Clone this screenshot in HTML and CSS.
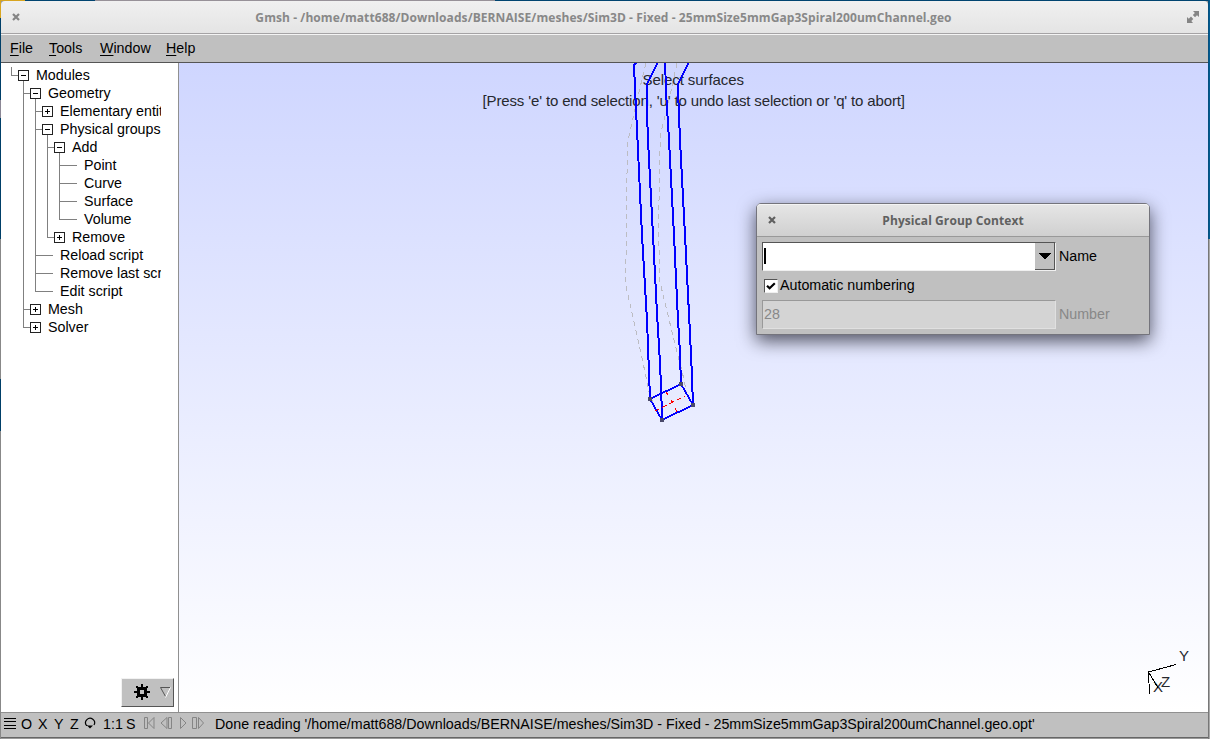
FILE: index.html
```html
<!DOCTYPE html>
<html lang="en">
<head>
<meta charset="utf-8">
<title>Gmsh</title>
<link rel="stylesheet" href="styles.css">
</head>
<body>
<div class="desktop">
<div class="window">
  <header class="titlebar">
    <svg class="close" width="8" height="8" viewBox="0 0 8 8"><path d="M1 1L7 7M7 1L1 7"/></svg>
    <span class="title">Gmsh - /home/matt688/Downloads/BERNAISE/meshes/Sim3D - Fixed - 25mmSize5mmGap3Spiral200umChannel.geo</span>
    <svg class="expand" width="12" height="12" viewBox="0 0 12 12"><path d="M6 0H12V6L10 4.3L8 6.3L5.8 4L7.9 2ZM0 6L1.8 7.7L4 5.6L6.3 8L4.3 10L6 12H0Z"/></svg>
  </header>
  <nav class="menubar">
    <span class="menu m-file"><u>F</u>ile</span><span class="menu m-tools"><u>T</u>ools</span><span class="menu m-window"><u>W</u>indow</span><span class="menu m-help"><u>H</u>elp</span>
  </nav>
  <main class="main">
    <aside class="sidebar">
      <div class="tree">
        <svg class="guides" width="160" height="275" viewBox="1 63 160 275" shape-rendering="crispEdges">
          <path class="guide" d="M11.5 67V75.5H18M23.5 81V327.5H30M23.5 93.5H30M23.5 309.5H30M35.5 99V291.5H53M35.5 111.5H42M35.5 129.5H42M35.5 255.5H53M35.5 273.5H53M47.5 135V237.5H54M47.5 147.5H54M59.5 153V219.5H77M59.5 165.5H77M59.5 183.5H77M59.5 201.5H77"/>
        </svg>
        <div class="row l0"><i class="box"></i>Modules</div>
        <div class="row l1"><i class="box"></i>Geometry</div>
        <div class="row l2"><i class="box plus"></i>Elementary entities</div>
        <div class="row l2"><i class="box"></i>Physical groups</div>
        <div class="row l3"><i class="box"></i>Add</div>
        <div class="row leaf4">Point</div>
        <div class="row leaf4">Curve</div>
        <div class="row leaf4">Surface</div>
        <div class="row leaf4">Volume</div>
        <div class="row l3"><i class="box plus"></i>Remove</div>
        <div class="row leaf2">Reload script</div>
        <div class="row leaf2">Remove last script</div>
        <div class="row leaf2">Edit script</div>
        <div class="row l1"><i class="box plus"></i>Mesh</div>
        <div class="row l1"><i class="box plus"></i>Solver</div>
      </div>
      <div class="gear">
        <svg width="51" height="27" viewBox="0 0 51 27" shape-rendering="crispEdges">
          <g transform="translate(12,5)"><path d="M3 3H13V13H3ZM7 0H9V3H7ZM7 13H9V16H7ZM0 7H3V9H0ZM13 7H16V9H13ZM2 2H4V4H2ZM12 2H14V4H12ZM2 12H4V14H2ZM12 12H14V14H12Z"/><path fill="#c0c0c0" d="M6 6H10V10H6Z"/></g>
          <g fill="none" shape-rendering="auto"><path stroke="#555" d="M43.5 17.5L38.5 8.5H48"/><path stroke="#fff" d="M48.5 8.5L43.5 18.5"/></g>
        </svg>
      </div>
    </aside>
    <section class="canvas">
      <svg class="scene" width="1029" height="649" viewBox="179 63 1029 649">
        <g class="hidden-edges">
          <path d="M646 63L637 100L628 141L626.5 190L626.3 230L625.7 285L642.5 360L650 397L653 402"/>
          <path d="M677 63L669 100L661 132L659.5 160L658.7 227L659.5 280L674 340L682.5 373L687 395L693 405"/>
        </g>
        <g class="labels">
          <text x="642.5" y="84.500" textLength="101.5">Select surfaces</text>
          <text x="482.500" y="106" textLength="422.500">[Press 'e' to end selection, 'u' to undo last selection or 'q' to abort]</text>
          <text x="1179" y="661">Y</text><text x="1161" y="687">Z</text><text x="1153" y="692">X</text>
        </g>
        <g class="edges">
          <path d="M636 63L634 65L636 110L637.5 140L642 235L647 320L650 399"/>
          <path d="M657.5 63L646.5 85V100L648 140L653 235L657 313L660 363L661.3 393L662 420"/>
          <path d="M665 63L666.5 100L669 140L674 235L677.5 310L679.8 350L681 384"/>
          <path d="M688.5 63L677.5 85L678.5 103L680 140L685 235L689.3 320L691.7 370L693 405"/>
          <path class="thin" d="M650 399L681 384L693 405L662 420Z"/>
        </g>
        <path class="normals" d="M655 411L685 396M666 392L668 395M675 408L677 412M671 400L673 403"/>
        <path class="points" d="M648 397h4v4h-4zM679 382h4v4h-4zM691 403h4v4h-4zM660 418h4v4h-4z"/>
        <path class="axes" d="M1176 664.5L1148.5 672L1149.5 694M1148.5 672L1158 688"/>
      </svg>
    </section>
  </main>
  <footer class="status">
    <svg class="tools" width="204" height="24" viewBox="1 713 204 24">
      <path class="k" shape-rendering="crispEdges" d="M4 718.5H16M4 721.5H16M4 725.5H16M4 728.5H16"/>
      <path class="k" d="M87.500 725.500H86.500A4.500 4.500 0 1 1 94 725"/><path d="M87 725.500H93L90 728.500Z"/>
      <g class="dim"><path d="M144.5 717.5H147.5V728.5H144.5ZM154 717.5L148.5 723L154 728.5ZM167 717.5L161 723L167 728.5ZM168.5 717.5H171.500V728.5H168.5ZM180.500 717.5L186 723L180.500 728.500ZM192.500 717.500H196.500V728.500H192.500ZM198.500 717.500L203.500 723L198.500 728.500Z"/></g>
      <g class="stxt"><text x="21" y="729">O</text><text x="38" y="729">X</text><text x="54" y="729">Y</text><text x="70" y="729">Z</text><text x="103" y="729">1:1</text><text x="126" y="729">S</text></g>
    </svg>
    <span class="message">Done reading '/home/matt688/Downloads/BERNAISE/meshes/Sim3D - Fixed - 25mmSize5mmGap3Spiral200umChannel.geo.opt'</span>
  </footer>
</div>
<div class="dialog">
  <header class="dialog-title">
    <svg class="close" width="8" height="8" viewBox="0 0 8 8"><path d="M1 1L7 7M7 1L1 7"/></svg>
    <span class="title">Physical Group Context</span>
  </header>
  <div class="dialog-body">
    <div class="field-row">
      <div class="input"><i class="caret"></i><div class="drop"><svg width="12" height="7" viewBox="0 0 12 7" shape-rendering="crispEdges"><path d="M0 0H12L6 7Z"/></svg></div></div>
      <span class="field-label">Name</span>
    </div>
    <div class="check-row">
      <div class="check"><svg width="10" height="10" viewBox="0 0 10 10"><path d="M1 4.700L3.600 7.300L8.800 2.200"/></svg></div><span class="field-label">Automatic numbering</span>
    </div>
    <div class="field-row disabled">
      <div class="input">28</div>
      <span class="field-label">Number</span>
    </div>
  </div>
</div>
</div>
</body>
</html>
```
FILE: styles.css
```css
* { box-sizing: border-box; }
body {
  margin: 0;
  width: 1210px;
  height: 739px;
  overflow: hidden;
  font: 14.25px/18px "Liberation Sans", Arial, sans-serif;
  color: #000;
}
.desktop {
  position: relative;
  width: 1210px;
  height: 739px;
  padding: 1px 2px 1px 1px;
  background:
    linear-gradient(#d8a520 0 18px, #003f68 18px 100px, #8b8795 100px 118px, #003f68 118px 239px, #888 239px 379px, #003f68 379px 431px, #888 431px) 0 0 / 1px 739px no-repeat,
    linear-gradient(#005b91 0 239px, #a9a9a9 239px) 1209px 0 / 1px 739px no-repeat,
    linear-gradient(#06507f 0 239px, #777 239px) 1208px 0 / 1px 739px no-repeat,
    linear-gradient(90deg, #d8a520 0 25px, #004470 25px 95px, #979198 95px 495px, #004470 495px) 0 0 / 1210px 1px no-repeat,
    #999;
}
.window {
  display: flex;
  flex-direction: column;
  width: 1207px;
  height: 737px;
  border-bottom: 1px solid #666;
  border-radius: 4px 4px 0 0;
  overflow: hidden;
}
.titlebar {
  display: flex;
  align-items: center;
  height: 34px;
  padding: 0 9px 2px 11px;
  border-bottom: 1px solid #f4f4f4;
  box-shadow: inset 0 -1px #a5a3a5;
  background: linear-gradient(#f0f0f0, #e4e4e4);
  color: #888;
}
.title {
  flex: 1;
  padding-top: 2px;
  text-align: center;
  font: bold 12px/20px "Open Sans", "Noto Sans", sans-serif;
  letter-spacing: 0.08px;
  white-space: nowrap;
}
.close { fill: none; stroke: #858585; stroke-width: 2.2; }
.expand { fill: #858585; }
.menubar {
  display: flex;
  height: 28px;
  padding: 4px 9px;
  background: #c0c0c0;
  border-bottom: 1px solid #555;
}
.menu u { text-underline-offset: 2px; text-decoration-thickness: 1px; }
.m-file { width: 39px; }
.m-tools { width: 51px; }
.m-window { width: 66px; }
.main { display: flex; height: 649px; }
.sidebar {
  display: flex;
  flex-direction: column;
  justify-content: space-between;
  width: 178px;
  padding-bottom: 5px;
  background: #fff;
  border-right: 1px solid #909090;
}
.tree { position: relative; width: 160px; padding-top: 4px; overflow: hidden; }
.guides { position: absolute; left: 0; top: 0; }
.guide { fill: none; stroke: #808080; }
.row { position: relative; display: flex; height: 18px; line-height: 17px; white-space: nowrap; }
.l0 { padding-left: 17px; }
.l1 { padding-left: 29px; }
.l2 { padding-left: 41px; }
.l3 { padding-left: 53px; }
.leaf2 { padding-left: 59px; }
.leaf4 { padding-left: 83px; }
.box {
  flex: none;
  width: 11px;
  height: 11px;
  margin: 3px 7px 0 0;
  border: 1px solid #222;
  background: linear-gradient(#000, #000) 2px 4px / 5px 1px no-repeat #fff;
}
.plus {
  background:
    linear-gradient(#000, #000) 2px 4px / 5px 1px no-repeat,
    linear-gradient(#000, #000) 4px 2px / 1px 5px no-repeat #fff;
}
.gear {
  align-self: flex-end;
  width: 53px;
  height: 29px;
  margin-right: 4px;
  border: 1px solid;
  border-color: #f2f2f2 #555 #555 #f2f2f2;
  background: #c0c0c0;
}
.gear svg { display: block; }
.canvas { flex: 1; background: linear-gradient(#cfd6ff, #fff); }
.scene { display: block; }
.scene path { fill: none; shape-rendering: crispEdges; }
.hidden-edges { stroke: #bcbcc2; stroke-width: 1; stroke-dasharray: 5 4; }
.edges { stroke: #00f; stroke-width: 2; }
.scene .thin { stroke-width: 1.8; }
.normals { stroke: #f00; stroke-width: 1; stroke-dasharray: 5 3; }
.scene .points { fill: #4a4a6a; }
.axes { stroke: #000; }
.labels { font-size: 15px; fill: #26282e; }
.status {
  display: flex;
  height: 25px;
  border-top: 1px solid #909090;
  background: #c0c0c0;
  line-height: 23px;
  white-space: nowrap;
}
.tools { flex: none; margin-right: 10px; }
.k { stroke: #000; stroke-width: 1.2; fill: none; }
.dim { stroke: #858585; fill: none; }
.dialog {
  position: absolute;
  left: 756px;
  top: 203px;
  width: 394px;
  height: 132px;
  border: 1px solid #74747c;
  border-radius: 5px 5px 0 0;
  background: #c0c0c0;
  box-shadow: 0 6px 18px rgba(0, 0, 10, .65);
}
.dialog-title {
  display: flex;
  align-items: center;
  height: 33px;
  padding: 0 19px 0 11px;
  border-bottom: 1px solid #999;
  border-radius: 4px 4px 0 0;
  background: linear-gradient(#e6e6e6, #d0d0d0);
  box-shadow: inset 0 1px #f4f4f4;
  color: #606060;
}
.dialog-title .close { stroke: #606060; }
.dialog-body { display: flex; flex-direction: column; padding: 5px; }
.field-row { display: flex; align-items: center; gap: 3px; height: 29px; }
.field-label { padding-bottom: 2px; }
.input {
  display: flex;
  width: 294px;
  height: 29px;
  border: 1px solid;
  border-color: #555 #f0f0f0 #f0f0f0 #555;
  background: #fff;
  justify-content: space-between;
}
.caret { width: 2px; height: 16px; margin: 5px 0 0 1px; background: #000; }
.drop {
  display: flex;
  align-items: center;
  justify-content: center;
  width: 20px;
  height: 27px;
  border-right: 1px solid #555;
  border-bottom: 1px solid #555;
  background: #c0c0c0;
}
.check-row { display: flex; align-items: center; height: 29px; padding-left: 2px; gap: 2px; }
.check {
  width: 14px;
  height: 14px;
  padding: 1px;
  border: 1px solid;
  border-color: #555 #f0f0f0 #f0f0f0 #555;
  background: #fff;
}
.check svg { display: block; fill: none; stroke: #000; stroke-width: 2.2; }
.disabled { color: #888; }
.disabled .input { padding: 4px 1px; border-color: #999 #e0e0e0 #e0e0e0 #999; background: #d4d4d4; }
```
